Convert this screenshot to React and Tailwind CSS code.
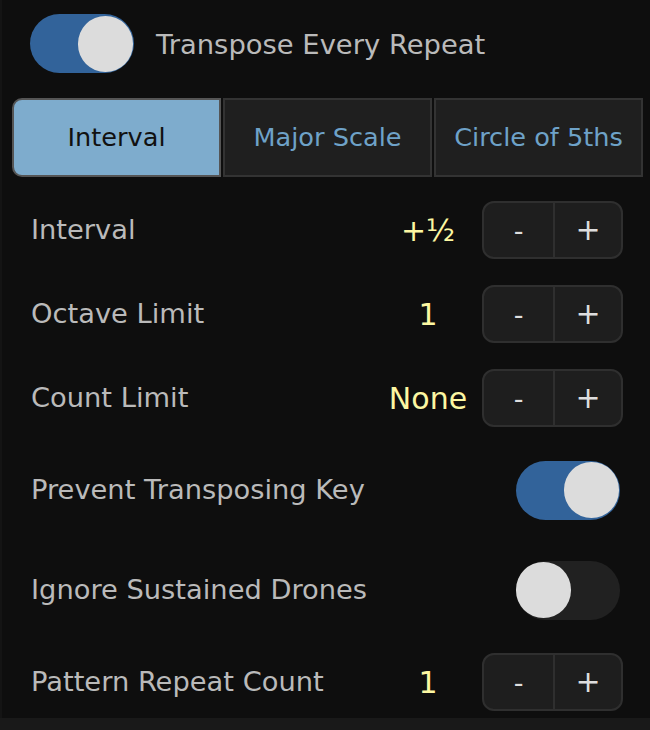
import React from "react";

function Toggle({ on }) {
  return (
    <div
      className={`relative w-[104px] h-[59px] rounded-full shrink-0 ${
        on ? "bg-[#32639a]" : "bg-[#212121]"
      }`}
    >
      <div
        className={`absolute top-[1.5px] w-[55px] h-[56px] rounded-full bg-[#dcdcdc] ${
          on ? "right-[1px]" : "left-0"
        }`}
      />
    </div>
  );
}

function Stepper() {
  return (
    <div className="flex w-[141px] h-[58px] rounded-[12px] border-2 border-[#2f2f2f] bg-[#1e1e1e] overflow-hidden shrink-0">
      <div className="w-[69px] h-full flex items-center justify-center text-[27px] text-[#dedede] leading-none">
        -
      </div>
      <div className="w-[2px] h-full bg-[#2f2f2f]" />
      <div className="flex-1 h-full flex items-center justify-center text-[30px] text-[#dedede] leading-none">
        +
      </div>
    </div>
  );
}

function StepRow({ label, value, last }) {
  return (
    <div
      className={`flex ${last ? "h-[78px] items-start pt-[13px]" : "h-[84px] items-center"} pl-[29px] pr-[27px]`}
    >
      <div className={`flex-1 text-[27.3px] text-[#bababa] ${last ? "h-[58px] flex items-center" : ""}`}>{label}</div>
      <div className={`w-[90px] text-center text-[30px] text-[#fcf7a2] mr-[9px] ${last ? "h-[58px] flex items-center justify-center" : ""}`}>
        {value}
      </div>
      <Stepper />
    </div>
  );
}

function ToggleRow({ label, on }) {
  return (
    <div className="flex h-[100px] items-center pl-[29px] pr-[30px]">
      <div className="flex-1 text-[27.3px] text-[#bababa]">{label}</div>
      <Toggle on={on} />
    </div>
  );
}

export default function App() {
  return (
    <div
      className="w-[650px] h-[730px] bg-[#191919] overflow-hidden"
      style={{ fontFamily: '"DejaVu Sans", sans-serif' }}
    >
      <div className="flex h-[718px]">
        <div className="w-[2px] h-full bg-[#141414]" />
        <div className="flex-1 h-full bg-[#0e0e0e] flex flex-col">
          <div className="flex items-center pt-[14px] pl-[28px]">
            <Toggle on />
            <div className="ml-[22px] mt-[3px] text-[27.4px] text-[#bababa] leading-none">
              Transpose Every Repeat
            </div>
          </div>
          <div className="flex mt-[25px] ml-[10px] w-[631px] h-[79px] gap-[2px]">
            <div className="w-[209px] h-full rounded-l-[10px] border-2 border-[#555555] bg-[#7eaccd] flex items-center justify-center text-[25.6px] text-[#111111]">
              Interval
            </div>
            <div className="w-[209px] h-full border-2 border-[#333333] bg-[#1f1f1f] flex items-center justify-center text-[25.6px] text-[#6ea2c8]">
              Major Scale
            </div>
            <div className="flex-1 h-full border-2 border-[#333333] bg-[#1f1f1f] flex items-center justify-center text-[25.6px] text-[#6ea2c8]">
              Circle of 5ths
            </div>
          </div>
          <div className="mt-[11px] flex flex-col">
            <StepRow label="Interval" value="+½" />
            <StepRow label="Octave Limit" value="1" />
            <StepRow label="Count Limit" value="None" />
            <ToggleRow label="Prevent Transposing Key" on />
            <ToggleRow label="Ignore Sustained Drones" on={false} />
            <StepRow label="Pattern Repeat Count" value="1" last />
          </div>
        </div>
      </div>
    </div>
  );
}
